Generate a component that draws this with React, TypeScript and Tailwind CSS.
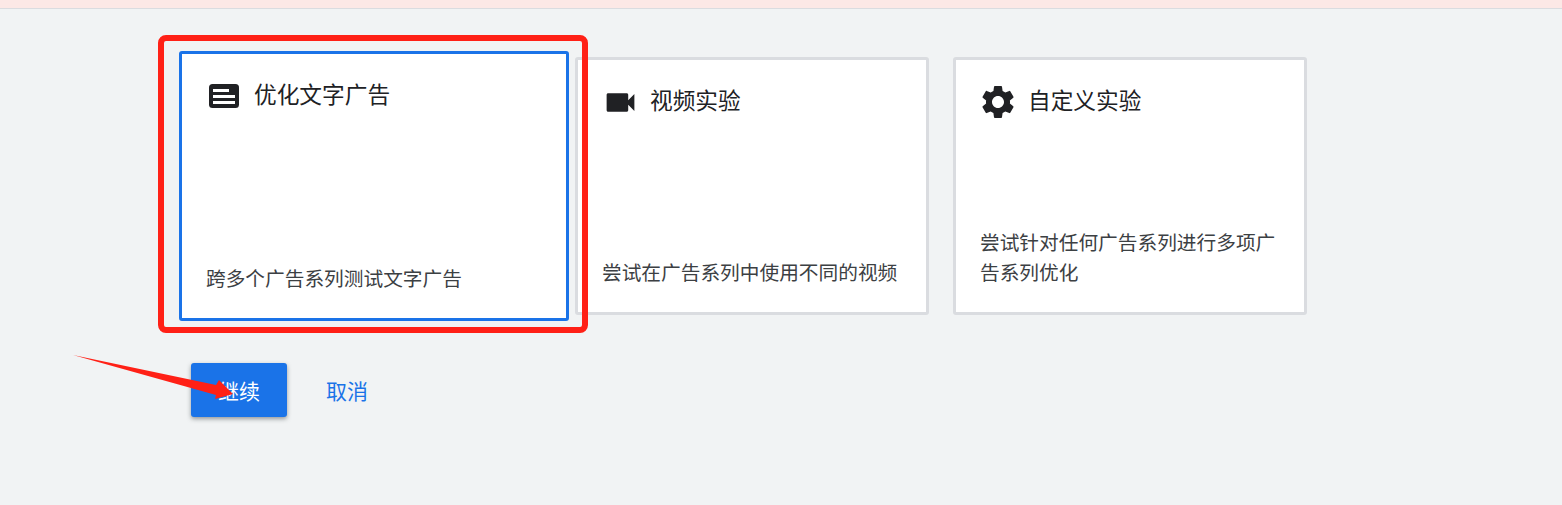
import React from 'react';
import { MdSettings, MdVideocam } from 'react-icons/md';

const fontStack = "font-['Liberation_Sans','Noto_Sans_CJK_SC',sans-serif]";

const TextAdIcon = () => (
  <svg width="30" height="24" viewBox="0 0 30 24" className="shrink-0">
    <rect width="30" height="24" rx="3.5" fill="#202124" />
    <rect x="4" y="5" width="16" height="3" fill="#fff" />
    <rect x="4" y="11" width="22" height="3" fill="#fff" />
    <rect x="4" y="17" width="22" height="3" fill="#fff" />
  </svg>
);

const App: React.FC = () => {
  return (
    <div className={`relative min-h-screen overflow-hidden bg-[#f1f3f4] ${fontStack}`}>
      {/* Notice strip */}
      <div className="h-[9px] border-b border-[#dadce0] bg-[#fce8e6]" />

      <div className="pl-[179px] pt-[42px]">
        <div className="flex items-center">
          {/* Selected card */}
          <div className="flex h-[270px] w-[390px] flex-col justify-between rounded-[3px] border-[3px] border-[#1a73e8] bg-white pb-6 pl-6 pr-4 pt-[27px]">
            <div className="ml-[3px] flex h-[30px] items-center gap-[15px]">
              <TextAdIcon />
              <span className="pb-[2px] text-[22.7px] text-[#202124]">优化文字广告</span>
            </div>
            <p className="text-[19.7px] leading-[30px] text-[#3c4043]">跨多个广告系列测试文字广告</p>
          </div>

          {/* Video card */}
          <div className="ml-[6px] flex h-[258px] w-[354px] flex-col justify-between rounded-[3px] border-[3px] border-[#dadce0] bg-white pb-6 pl-6 pr-4 pt-[27px]">
            <div className="flex h-[30px] items-center">
              <MdVideocam className="mr-[11px] shrink-0 text-[#202124]" size={37} />
              <span className="pb-[2px] text-[22.7px] text-[#202124]">视频实验</span>
            </div>
            <p className="text-[19.7px] leading-[30px] text-[#3c4043]">尝试在广告系列中使用不同的视频</p>
          </div>

          {/* Custom card */}
          <div className="ml-6 flex h-[258px] w-[354px] flex-col justify-between rounded-[3px] border-[3px] border-[#dadce0] bg-white pb-6 pl-6 pr-4 pt-[27px]">
            <div className="flex h-[30px] items-center">
              <MdSettings className="-ml-[2px] mr-[10px] shrink-0 text-[#202124]" size={40} />
              <span className="pb-[2px] text-[22.7px] text-[#202124]">自定义实验</span>
            </div>
            <p className="text-[19.7px] leading-[30px] text-[#3c4043]">尝试针对任何广告系列进行多项广告系列优化</p>
          </div>
        </div>

        <div className="ml-3 mt-[42px] flex items-center gap-[39px]">
          <button className="h-[54px] w-[96px] rounded-[3px] bg-[#1a73e8] pt-1 text-[21px] text-white shadow-[0_2px_4px_rgba(60,64,67,0.5)]">
            继续
          </button>
          <button className="pt-1 text-[21px] text-[#1a73e8]">取消</button>
        </div>
      </div>

      {/* Red annotation box */}
      <div className="pointer-events-none absolute left-[158px] top-[35px] h-[298px] w-[430px] rounded-[8px] border-[6px] border-[#ff2016]" />

      {/* Red annotation arrow */}
      <svg className="pointer-events-none absolute left-0 top-0" width="300" height="420">
        <polygon points="73,355 216,385 219,380 233,394 215,399 216,395" fill="#ff2016" />
      </svg>
    </div>
  );
};

export default App;
